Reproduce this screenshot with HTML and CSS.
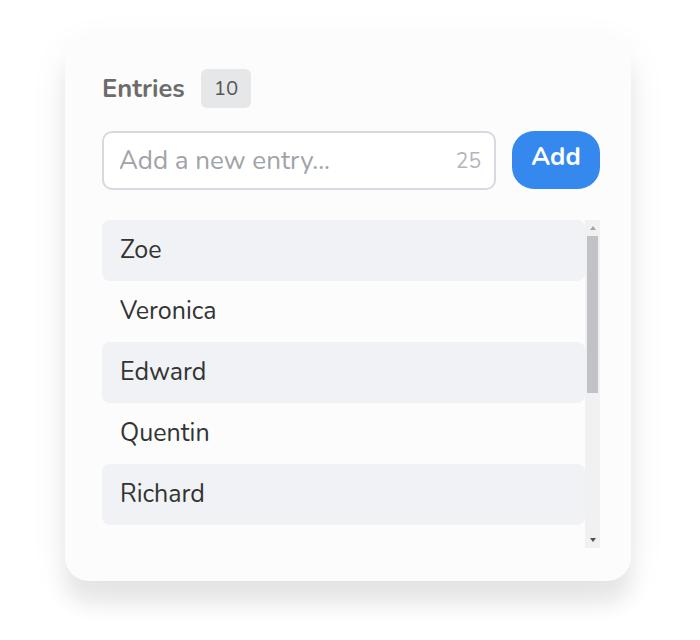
FILE: index.html
```html
<!DOCTYPE html>
<html lang="en">
<head>
  <meta charset="UTF-8">
  <title>Entries</title>
  <link rel="stylesheet" href="styles.css">
</head>
<body>

  <!-- Card with the list of entries -->
  <div class="card">
    <div class="card-head">
      <span class="title">Entries</span>
      <span class="count">10</span>
    </div>

    <div class="add-row">
      <div class="field">
        <input type="text" placeholder="Add a new entry..." maxlength="25">
        <span class="chars-left">25</span>
      </div>
      <button class="add-btn">Add</button>
    </div>

    <div class="list-wrap">
      <ul class="entries">
        <li>Zoe</li>
        <li>Veronica</li>
        <li>Edward</li>
        <li>Quentin</li>
        <li>Richard</li>
      </ul>

      <!-- scrollbar drawn by hand (headless hides the native one) -->
      <div class="scrollbar">
        <span class="arrow up"></span>
        <div class="track"><div class="thumb"></div></div>
        <span class="arrow down"></span>
      </div>
    </div>
  </div>

</body>
</html>
```

FILE: styles.css
```css
/* Reset */
* {
  margin: 0;
  padding: 0;
  box-sizing: border-box;
}
body {
  font-family: 'Nunito', 'Noto Sans', sans-serif;
  background: #fff;
  color: #333;
  display: flex;
  justify-content: center;
  align-items: flex-start;
  min-height: 100vh;
  padding: 37px 0 59px 0;
}

/* Card */
.card {
  width: 566px;
  height: 544px;
  margin-left: -4px;
  background: #fcfcfc;
  border-radius: 24px;
  padding: 32px 31px 33px 37px;
  box-shadow: 0 24px 20px rgba(0,0,0,0.07), 0 10px 40px rgba(0,0,0,0.06);
  display: flex;
  flex-direction: column;
}

/* Header: title + counter */
.card-head {
  display: flex;
  align-items: center;
  gap: 16px;
  height: 39px;
}
.title {
  font-size: 25.5px;
  font-weight: 700;
  color: #6c6c6c;
}
.count {
  background: #e6e7e9;
  color: #555;
  font-size: 20.5px;
  height: 39px;
  line-height: 39px;
  padding: 0 13px;
  border-radius: 6px;
}

/* Input row */
.add-row {
  display: flex;
  gap: 16px;
  margin-top: 23px;
}
.field {
  position: relative;
  flex: 1;
}
.field input {
  width: 100%;
  height: 59px;
  border: 2px solid #d6d9e0;
  border-radius: 10px;
  background: #fff;
  padding: 0 60px 0 15px;
  font-family: inherit;
  font-size: 26px;
  color: #333;
  outline: none;
}
.field input::placeholder {
  color: #a0a3a8;
}
.chars-left {
  position: absolute;
  right: 15px;
  top: 50%;
  transform: translateY(-50%);
  font-size: 21px;
  color: #b4b6ba;
}
.add-btn {
  width: 88px;
  height: 58px;
  border: none;
  border-radius: 22px;
  background: #3589ee;
  color: #fff;
  font-family: inherit;
  font-size: 25.5px;
  font-weight: 700;
  padding-bottom: 7px;
  cursor: pointer;
}

/* List area */
.list-wrap {
  position: relative;
  margin-top: 30px;
  height: 328px;
  width: 498px;
  padding-right: 15px;
}
.entries {
  list-style: none;
  height: 305px;
  overflow: hidden;
}
.entries li {
  height: 61px;
  line-height: 61px;
  padding: 0 18px;
  font-size: 25px;
  color: #333;
  border-radius: 8px;
}
.entries li:nth-child(odd) {
  background: #f1f2f5;
}

/* Scrollbar */
.scrollbar {
  position: absolute;
  top: 0;
  right: 0;
  bottom: 0;
  width: 15px;
  background: #f1f1f3;
  display: flex;
  flex-direction: column;
  align-items: center;
}
.arrow {
  width: 0;
  height: 0;
  border-left: 3.5px solid transparent;
  border-right: 3.5px solid transparent;
}
.arrow.up {
  border-bottom: 4px solid #a3a3a3;
  margin: 6px 0 5px;
}
.arrow.down {
  border-top: 4px solid #505050;
  margin: 5px 0 6px;
}
.track {
  flex: 1;
  width: 100%;
  padding: 1px 2px 0;
}
.thumb {
  height: 157px;
  background: #c1c2c5;
}
```
